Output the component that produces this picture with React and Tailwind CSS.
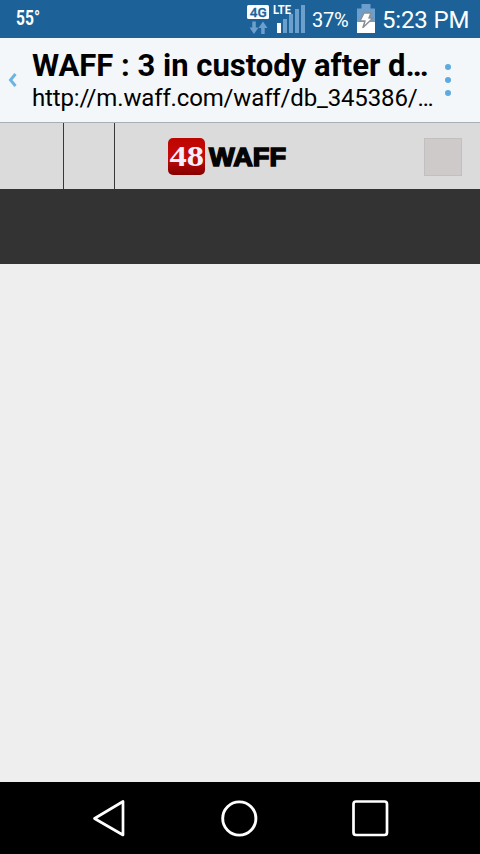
import React from "react";

// ─── Status bar icons ─────────────────────────────────────────────────────────
const NetworkIcon = () => (
  <svg className="h-[38px] w-[60px] shrink-0" viewBox="246 0 60 38">
    <rect x="247" y="5" width="22" height="14" rx="1.5" fill="#fff" />
    <text x="249.800" y="16.800" textLength="17" fontSize="13.500" fontWeight="500" fontFamily="Roboto, sans-serif" fill="#1c6299" stroke="#1c6299" strokeWidth="0.300" lengthAdjust="spacingAndGlyphs">
      4G
    </text>
    <path d="M252.300 21.500h3.500v6h2.700L254 34l-4.500-6.500h2.800zM261.200 34h3.500v-6h2.800L263 21.500l-4.500 6.500h2.700z" fill="#6c9fcb" />
    <path d="M283 19h4v14h-4zM289 14h4v19h-4zM295 9h4v24h-4zM301 5h4v28h-4z" fill="#6c9fcb" />
    <path d="M277 23h4v10h-4z" fill="#fff" />
    <text x="273" y="14" textLength="18" fontSize="13" fontWeight="700" fontFamily="Roboto, sans-serif" fill="#fff" lengthAdjust="spacingAndGlyphs">
      LTE
    </text>
  </svg>
);

const BatteryIcon = () => (
  <svg className="h-[38px] w-[18px] shrink-0" viewBox="357 0 18 38">
    <path d="M361.500 4h9v4.500h4.500V22h-18V8.500h4.500z" fill="#6c9fcb" />
    <path d="M357 22h18v11h-18z" fill="#fff" />
    <path
      d="M364 13h7l-2 5h4l-10 9.500 2-6.500h-5z"
      fill="#fff"
      stroke="#8b8f94"
      strokeWidth="1.500"
      strokeLinejoin="round"
    />
  </svg>
);

const StatusBar = () => (
  <div className="flex h-[38px] shrink-0 items-center bg-[#1c6299] pl-4 text-white">
    <span className="origin-left scale-x-80 text-[19.500px] leading-none font-bold">55°</span>
    <div className="ml-auto flex items-center pr-[11px]">
      <NetworkIcon />
      <span className="ml-[6px] w-[45px] pt-[2px] text-[20px] leading-none tracking-[-0.2px]">37%</span>
      <BatteryIcon />
      <span className="ml-[7px] w-[87px] pt-[1px] text-[24px] leading-none tracking-[-0.15px] whitespace-nowrap">
        5:23 PM
      </span>
    </div>
  </div>
);

// ─── Browser header ───────────────────────────────────────────────────────────
const BrowserHeader = () => (
  <header className="flex h-[85px] shrink-0 items-center border-b border-[#a5afb8] bg-[#f3f7fa]">
    <svg className="ml-[8px] h-4 w-[10px] shrink-0" viewBox="0 0 10 16" fill="none">
      <path d="M7.500 2L2.500 8l5 6" stroke="#6db3e2" strokeWidth="2.900" />
    </svg>
    <div className="ml-[14px] w-[406px] shrink-0 whitespace-nowrap text-black">
      <h1 className="text-[31px] leading-[36px] font-bold">WAFF : 3 in custody after d…</h1>
      <p className="text-[24px] leading-[28px] tracking-[-0.15px]">http://m.waff.com/waff/db_345386/…</p>
    </div>
    <div className="ml-[7px] flex flex-col gap-[7px]">
      <span className="size-[6px] rounded-full bg-[#5eaadf]" />
      <span className="size-[6px] rounded-full bg-[#5eaadf]" />
      <span className="size-[6px] rounded-full bg-[#5eaadf]" />
    </div>
  </header>
);

// ─── Site toolbar ─────────────────────────────────────────────────────────────
const Logo = () => (
  <svg className="h-[38px] w-[120px] shrink-0" viewBox="168 137 120 38">
    <defs>
      <linearGradient id="badge" x1="0" y1="0" x2="0" y2="1">
        <stop offset="0" stopColor="#bd0500" />
        <stop offset="0.500" stopColor="#c50b0b" />
        <stop offset="1" stopColor="#860000" />
      </linearGradient>
    </defs>
    <rect x="168" y="138" width="37" height="37" rx="5" fill="url(#badge)" />
    <text x="169.500" y="165.500" textLength="34.500" fontSize="29" fontWeight="700" fontFamily="Liberation Serif, serif" fill="#f4efff" lengthAdjust="spacingAndGlyphs">
      48
    </text>
    <text x="209" y="165.500" textLength="77" fontSize="25.500" fontWeight="700" fontFamily="Liberation Sans, sans-serif" fill="#050505" stroke="#050505" strokeWidth="1.500" lengthAdjust="spacingAndGlyphs">
      WAFF
    </text>
  </svg>
);

const SiteToolbar = () => (
  <div className="flex h-[66px] shrink-0 items-center bg-[#dbdbdb]">
    <div className="h-full w-[64px] shrink-0 border-r border-[#383838]" />
    <div className="h-full w-[51px] shrink-0 border-r border-[#383838]" />
    <div className="ml-[53px] flex">
      <Logo />
    </div>
    <div className="mt-px mr-[18px] ml-auto size-[38px] border border-[#c2bfbf] bg-[#cecac9]" />
  </div>
);

// ─── Android navigation ───────────────────────────────────────────────────────
const NavBar = () => (
  <nav className="flex h-[72px] shrink-0 items-center justify-between bg-black pr-[91px] pl-[92px]">
    <svg className="h-[38px] w-[33px]" viewBox="0 0 33 38" fill="none">
      <path d="M31 2.500v33.500L2.500 19.500z" stroke="#fff" strokeWidth="2.700" strokeLinejoin="round" />
    </svg>
    <svg className="ml-[2px] size-[38px]" viewBox="0 0 38 38" fill="none">
      <circle cx="19.300" cy="19.500" r="16.600" stroke="#fff" strokeWidth="2.900" />
    </svg>
    <svg className="size-[38px]" viewBox="0 0 38 38" fill="none">
      <rect x="2.500" y="2.500" width="33.500" height="33.500" rx="2.500" stroke="#fff" strokeWidth="2.700" />
    </svg>
  </nav>
);

export default function App() {
  return (
    <div className="flex h-[854px] w-[480px] flex-col overflow-hidden bg-[#eeeeee] font-['Roboto',sans-serif]">
      <StatusBar />
      <BrowserHeader />
      <SiteToolbar />
      <div className="h-[75px] shrink-0 bg-[#333333]" />
      <main className="flex-1 bg-[#eeeeee]" />
      <NavBar />
    </div>
  );
}
